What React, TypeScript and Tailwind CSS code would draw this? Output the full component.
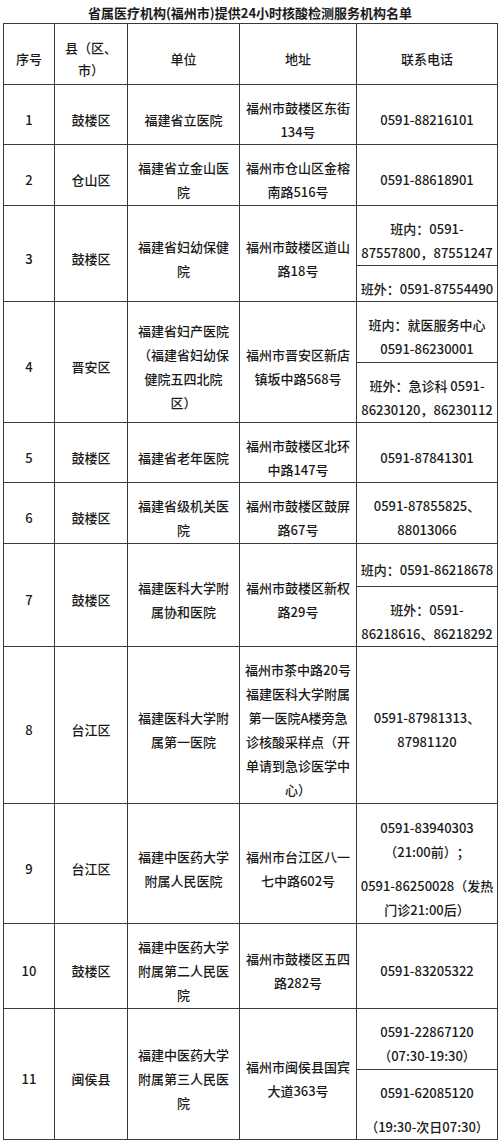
import React from "react";

type Row = {
  no: string;
  area: string[];
  unit: string[];
  addr: string[];
  // each sub cell -> paragraphs -> lines
  phone: string[][][];
  heights: string[];
};

const rows: Row[] = [
  { no: "1", area: ["鼓楼区"], unit: ["福建省立医院"], addr: ["福州市鼓楼区东街", "134号"], phone: [[["0591-88216101"]]], heights: ["h-[60px]"] },
  { no: "2", area: ["仓山区"], unit: ["福建省立金山医", "院"], addr: ["福州市仓山区金榕", "南路516号"], phone: [[["0591-88618901"]]], heights: ["h-[61px]"] },
  {
    no: "3", area: ["鼓楼区"], unit: ["福建省妇幼保健", "院"], addr: ["福州市鼓楼区道山", "路18号"],
    phone: [[["班内：0591-", "87557800，87551247"]], [["班外：0591-87554490"]]],
    heights: ["h-[60px]", "h-[36px]"],
  },
  {
    no: "4", area: ["晋安区"], unit: ["福建省妇产医院", "（福建省妇幼保", "健院五四北院", "区）"], addr: ["福州市晋安区新店", "镇坂中路568号"],
    phone: [[["班内：就医服务中心", "0591-86230001"]], [["班外：急诊科 0591-", "86230120，86230112"]]],
    heights: ["h-[61px]", "h-[60px]"],
  },
  { no: "5", area: ["鼓楼区"], unit: ["福建省老年医院"], addr: ["福州市鼓楼区北环", "中路147号"], phone: [[["0591-87841301"]]], heights: ["h-[60px]"] },
  { no: "6", area: ["鼓楼区"], unit: ["福建省级机关医", "院"], addr: ["福州市鼓楼区鼓屏", "路67号"], phone: [[["0591-87855825、", "88013066"]]], heights: ["h-[61px]"] },
  {
    no: "7", area: ["鼓楼区"], unit: ["福建医科大学附", "属协和医院"], addr: ["福州市鼓楼区新权", "路29号"],
    phone: [[["班内：0591-86218678"]], [["班外：0591-", "86218616、86218292"]]],
    heights: ["h-[43px]", "h-[60px]"],
  },
  {
    no: "8", area: ["台江区"], unit: ["福建医科大学附", "属第一医院"],
    addr: ["福州市茶中路20号", "福建医科大学附属", "第一医院A楼旁急", "诊核酸采样点（开", "单请到急诊医学中", "心）"],
    phone: [[["0591-87981313、", "87981120"]]], heights: ["h-[157px]"],
  },
  {
    no: "9", area: ["台江区"], unit: ["福建中医药大学", "附属人民医院"], addr: ["福州市台江区八一", "七中路602号"],
    phone: [[["0591-83940303", "（21:00前）；"], ["0591-86250028（发热", "门诊21:00后）"]]], heights: ["h-[120px]"],
  },
  { no: "10", area: ["鼓楼区"], unit: ["福建中医药大学", "附属第二人民医", "院"], addr: ["福州市鼓楼区五四", "路282号"], phone: [[["0591-83205322"]]], heights: ["h-[85px]"] },
  {
    no: "11", area: ["闽侯县"], unit: ["福建中医药大学", "附属第三人民医", "院"], addr: ["福州市闽侯县国宾", "大道363号"],
    phone: [[["0591-22867120", "（07:30-19:30）"]], [["0591-62085120"], ["（19:30-次日07:30）"]]],
    heights: ["h-[61px]", "h-[70px]"],
  },
];

const cell = "border border-[#3a3a3a] text-center align-middle px-[3px] pt-[10px] pb-0 leading-[24px] whitespace-nowrap";

function Lines({ lines }: { lines: string[] }) {
  return (
    <>
      {lines.map((l, i) => (
        <div key={i}>{l}</div>
      ))}
    </>
  );
}

function Phone({ paras }: { paras: string[][] }) {
  return (
    <>
      {paras.map((p, i) => (
        <div key={i} className={i > 0 ? "mt-[10px]" : ""}>
          <Lines lines={p} />
        </div>
      ))}
    </>
  );
}

export default function App() {
  return (
    <div
      className="w-[500px] min-h-[1147px] bg-white text-[#1a1a1a] text-[13px] font-medium [text-spacing-trim:space-all]"
      style={{ fontFamily: '"Noto Sans CJK SC", "Noto Sans", sans-serif' }}
    >
      <div className="h-[23px] pt-[3px] leading-[20px] text-center font-bold">
        省属医疗机构(福州市)提供24小时核酸检测服务机构名单
      </div>
      <table className="ml-[3px] w-[494px] table-fixed border-collapse">
        <colgroup>
          <col className="w-[51px]" />
          <col className="w-[73px]" />
          <col className="w-[112px]" />
          <col className="w-[117px]" />
          <col className="w-[141px]" />
        </colgroup>
        <tbody>
          <tr className="h-[61px]">
            <td className={cell}>序号</td>
            <td className={`${cell} !leading-[22px]`}>
              <Lines lines={["县（区、", "市）"]} />
            </td>
            <td className={cell}>单位</td>
            <td className={cell}>地址</td>
            <td className={cell}>联系电话</td>
          </tr>
          {rows.map((r) => {
            const main = (
              <>
                <td className={cell} rowSpan={r.phone.length}>{r.no}</td>
                <td className={cell} rowSpan={r.phone.length}><Lines lines={r.area} /></td>
                <td className={cell} rowSpan={r.phone.length}><Lines lines={r.unit} /></td>
                <td className={cell} rowSpan={r.phone.length}><Lines lines={r.addr} /></td>
                <td className={cell}><Phone paras={r.phone[0]} /></td>
              </>
            );
            if (r.phone.length === 1) {
              return (
                <tr key={r.no} className={r.heights[0]}>
                  {main}
                </tr>
              );
            }
            return (
              <React.Fragment key={r.no}>
                <tr className={r.heights[0]}>{main}</tr>
                <tr className={r.heights[1]}>
                  <td className={cell}><Phone paras={r.phone[1]} /></td>
                </tr>
              </React.Fragment>
            );
          })}
        </tbody>
      </table>
    </div>
  );
}
